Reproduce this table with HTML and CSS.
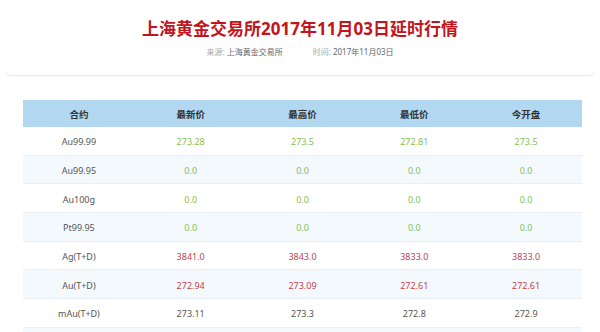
FILE: index.html
```html
<!DOCTYPE html>
<html lang="zh-CN">
<head>
<meta charset="utf-8">
<title>上海黄金交易所2017年11月03日延时行情</title>
<link rel="stylesheet" href="styles.css">
</head>
<body>
<div class="top">
  <h1 class="title">上海黄金交易所2017年11月03日延时行情</h1>
  <div class="meta">
    <span><span class="label">来源:</span> 上海黄金交易所</span>
    <span><span class="label">时间:</span> 2017年11月03日</span>
  </div>
</div>
<div class="content">
  <table class="quotes">
    <thead>
      <tr><th>合约</th><th>最新价</th><th>最高价</th><th>最低价</th><th>今开盘</th></tr>
    </thead>
    <tbody>
      <tr><td>Au99.99</td><td class="up">273.28</td><td class="up">273.5</td><td class="up">272.81</td><td class="up">273.5</td></tr>
      <tr><td>Au99.95</td><td class="up">0.0</td><td class="up">0.0</td><td class="up">0.0</td><td class="up">0.0</td></tr>
      <tr><td>Au100g</td><td class="up">0.0</td><td class="up">0.0</td><td class="up">0.0</td><td class="up">0.0</td></tr>
      <tr><td>Pt99.95</td><td class="up">0.0</td><td class="up">0.0</td><td class="up">0.0</td><td class="up">0.0</td></tr>
      <tr><td>Ag(T+D)</td><td class="down">3841.0</td><td class="down">3843.0</td><td class="down">3833.0</td><td class="down">3833.0</td></tr>
      <tr><td>Au(T+D)</td><td class="down">272.94</td><td class="down">273.09</td><td class="down">272.61</td><td class="down">272.61</td></tr>
      <tr><td>mAu(T+D)</td><td>273.11</td><td>273.3</td><td>272.8</td><td>272.9</td></tr>
      <tr class="partial"><td></td><td></td><td></td><td></td><td></td></tr>
    </tbody>
  </table>
</div>
</body>
</html>
```
FILE: styles.css
```css
html, body {
  margin: 0;
  padding: 0;
  background: #fff;
  font-family: "Noto Sans", "Noto Sans CJK SC", sans-serif;
  color: #444;
  overflow: hidden;
}

.top {
  margin: 0 5px;
  height: 75px;
  border-bottom: 1px solid #ececec;
  border-radius: 0 0 6px 6px;
  box-shadow: 0 1px 1px rgba(0,0,0,0.03);
  display: flex;
  flex-direction: column;
  align-items: center;
}

.title {
  margin: 17px 0 0;
  font-size: 17px;
  line-height: 24px;
  font-weight: 700;
  color: #c3141b;
  font-family: "Noto Sans", "Noto Sans CJK SC", sans-serif;
}

.meta {
  margin-top: 5px;
  font-size: 8px;
  line-height: 12px;
  color: #666;
  display: flex;
  gap: 30px;
}

.label {
  color: #aaa;
}

.content {
  padding: 24px 18px 0 23px;
}

.quotes {
  width: 559px;
  border-collapse: collapse;
  table-layout: fixed;
  font-size: 9px;
}

.quotes th {
  background: #b2d8f1;
  height: 27px;
  padding: 0;
  font-size: 9.5px;
  font-weight: 700;
  color: #333;
  text-align: center;
}

.quotes td {
  height: 25.7px;
  padding: 2px 0 0;
  text-align: center;
  color: #555;
  border-bottom: 1px solid #e9f0f5;
}

.quotes tbody tr:nth-child(even) td {
  background: #f4f9fd;
}

.quotes td.up {
  color: #86bf55;
}

.quotes td.down {
  color: #c2434f;
}
```
